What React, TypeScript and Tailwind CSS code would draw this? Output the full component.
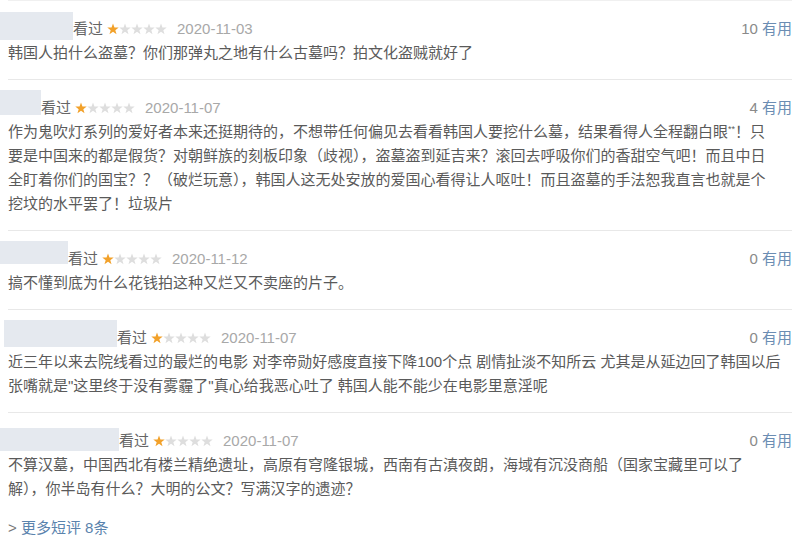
import React from "react";

type Review = {
  nameW: string;
  nameBox: string;
  date: string;
  useful: number;
  lines: React.ReactNode[];
};

const reviews: Review[] = [
  {
    nameW: "w-[73px] h-[28px] -mt-[5px]",
    nameBox: "-ml-2",
    date: "2020-11-03",
    useful: 10,
    lines: ["韩国人拍什么盗墓？你们那弹丸之地有什么古墓吗？拍文化盗贼就好了"],
  },
  {
    nameW: "w-[41px] h-[25px] -mt-[6px]",
    nameBox: "-ml-2",
    date: "2020-11-07",
    useful: 4,
    lines: [
      <>
        作为鬼吹灯系列的爱好者本来还挺期待的，不想带任何偏见去看看韩国人要挖什么墓，结果看得人全程翻白眼
        <span className="relative -top-[5px] text-[9px]">**</span>！只
      </>,
      "要是中国来的都是假货？对朝鲜族的刻板印象（歧视），盗墓盗到延吉来？滚回去呼吸你们的香甜空气吧！而且中日",
      "全盯着你们的国宝？？（破烂玩意），韩国人这无处安放的爱国心看得让人呕吐！而且盗墓的手法恕我直言也就是个",
      "挖坟的水平罢了！垃圾片",
    ],
  },
  {
    nameW: "w-[68px] h-[23px] -mt-[6px]",
    nameBox: "-ml-2",
    date: "2020-11-12",
    useful: 0,
    lines: ["搞不懂到底为什么花钱拍这种又烂又不卖座的片子。"],
  },
  {
    nameW: "w-[113px] h-[27px] -mt-[6px]",
    nameBox: "-ml-1",
    date: "2020-11-07",
    useful: 0,
    lines: [
      "近三年以来去院线看过的最烂的电影 对李帝勋好感度直接下降100个点 剧情扯淡不知所云 尤其是从延边回了韩国以后",
      "张嘴就是\"这里终于没有雾霾了\"真心给我恶心吐了 韩国人能不能少在电影里意淫呢",
    ],
  },
  {
    nameW: "w-[119px] h-[23px] -mt-[1px]",
    nameBox: "-ml-2",
    date: "2020-11-07",
    useful: 0,
    lines: [
      "不算汉墓，中国西北有楼兰精绝遗址，高原有穹隆银城，西南有古滇夜朗，海域有沉没商船（国家宝藏里可以了",
      "解），你半岛有什么？大明的公文？写满汉字的遗迹？",
    ],
  },
];

function Star({ on }: { on: boolean }) {
  return (
    <svg width="12" height="12" viewBox="0 0 12 12">
      <path
        d="M6 0.4L7.44 4.42 11.71 4.55 8.33 7.16 9.53 11.25 6 8.85 2.47 11.25 3.67 7.16 0.29 4.55 4.56 4.42Z"
        fill={on ? "#f2a12a" : "#dedede"}
      />
    </svg>
  );
}

export default function App() {
  return (
    <div
      className="w-[800px] h-[542px] bg-white overflow-hidden px-2 text-[15px] text-[#5a5a5a]"
      style={{ fontFamily: '"Liberation Sans", "Noto Sans CJK SC", sans-serif' }}
    >
      <div className="border-t border-[#f0f0f0]">
        {reviews.map((r, i) => (
          <div
            key={i}
            className={`pt-4 ${i < reviews.length - 1 ? "pb-[14px] border-b border-[#e8e8e8]" : ""}`}
          >
            <div className="flex items-center h-6 leading-6">
              <div className={`self-start bg-[#e5e9ef] ${r.nameW} ${r.nameBox}`} />
              <span className="text-[#666]">看过</span>
              <span className="flex ml-1">
                {[0, 1, 2, 3, 4].map((s) => (
                  <Star key={s} on={s === 0} />
                ))}
              </span>
              <span className="ml-[10px] text-[#a8a8a8]">{r.date}</span>
              <span className="ml-auto text-[#8a8a8a]">
                {r.useful} <span className="text-[#6b8db3]">有用</span>
              </span>
            </div>
            {r.lines.map((l, j) => (
              <div key={j} className="h-6 leading-6 whitespace-nowrap">
                {l}
              </div>
            ))}
          </div>
        ))}
        <div className="mt-[15px] h-6 leading-6">
          <span className="text-[#777]">&gt;</span>{" "}
          <span className="text-[#5a83ad]">更多短评 8条</span>
        </div>
      </div>
    </div>
  );
}
